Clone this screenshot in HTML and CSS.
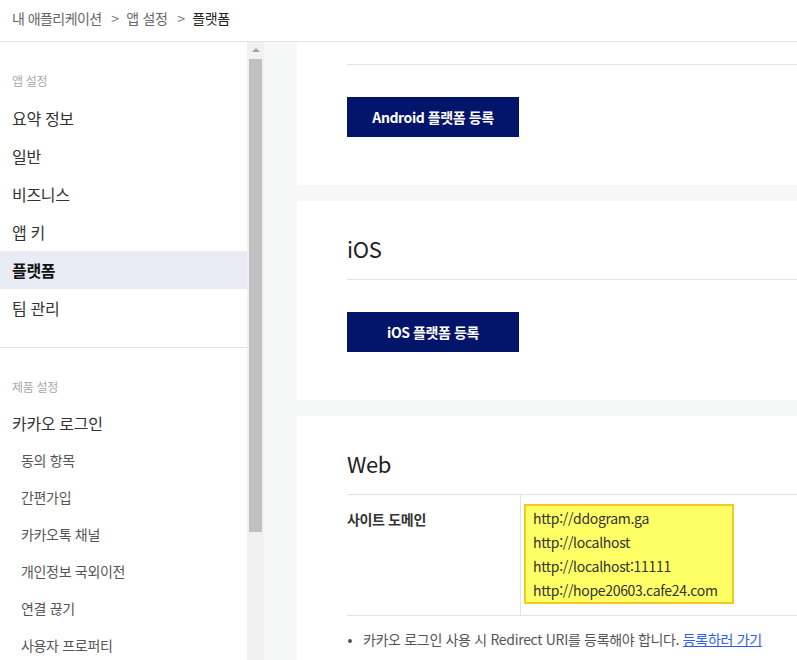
FILE: index.html
```html
<!DOCTYPE html>
<html lang="ko">
  <head>
    <meta charset="UTF-8" />
    <title>플랫폼 - 내 애플리케이션</title>
    <link rel="stylesheet" href="styles.css">
  </head>
  <body>
    <div class="breadcrumb">
      <span class="crumb">내 애플리케이션</span>
      <span class="sep">&gt;</span>
      <span class="crumb">앱 설정</span>
      <span class="sep">&gt;</span>
      <span class="crumb current">플랫폼</span>
    </div>

    <div class="layout">
      <nav class="sidebar">
        <div class="nav-label">앱 설정</div>
        <a class="nav-item">요약 정보</a>
        <a class="nav-item">일반</a>
        <a class="nav-item">비즈니스</a>
        <a class="nav-item">앱 키</a>
        <a class="nav-item active">플랫폼</a>
        <a class="nav-item">팀 관리</a>
        <hr class="nav-divider" />
        <div class="nav-label">제품 설정</div>
        <a class="nav-item">카카오 로그인</a>
        <a class="nav-sub">동의 항목</a>
        <a class="nav-sub">간편가입</a>
        <a class="nav-sub">카카오톡 채널</a>
        <a class="nav-sub">개인정보 국외이전</a>
        <a class="nav-sub">연결 끊기</a>
        <a class="nav-sub">사용자 프로퍼티</a>
      </nav>

      <div class="scrollbar">
        <div class="scroll-arrow"></div>
        <div class="scroll-thumb"></div>
      </div>

      <main class="content">
        <section class="panel panel-cut">
          <div class="panel-line"></div>
          <button class="btn-primary">Android 플랫폼 등록</button>
        </section>

        <section class="panel">
          <h2 class="panel-title">iOS</h2>
          <div class="panel-line"></div>
          <button class="btn-primary">iOS 플랫폼 등록</button>
        </section>

        <section class="panel">
          <h2 class="panel-title">Web</h2>
          <table class="info-table">
            <tr>
              <th>사이트 도메인</th>
              <td>
                <div class="domain-box">
                  <div>http://ddogram.ga</div>
                  <div>http://localhost</div>
                  <div>http://localhost:11111</div>
                  <div>http://hope20603.cafe24.com</div>
                </div>
              </td>
            </tr>
          </table>
          <ul class="notes">
            <li>카카오 로그인 사용 시 Redirect URI를 등록해야 합니다. <a href="#">등록하러 가기</a></li>
          </ul>
        </section>
      </main>
    </div>
  </body>
</html>
```

FILE: styles.css
```css
html, body {
    margin: 0;
    height: 100%;
    overflow: hidden;
}

body {
    font-family: 'Noto Sans CJK KR', 'Noto Sans', sans-serif;
    color: #333;
    background: #fff;
    letter-spacing: -0.02em;
}

.breadcrumb {
    height: 42px;
    line-height: 37px;
    padding-left: 12px;
    font-size: 14px;
    color: #666;
    border-bottom: 1px solid #e6e6e6;
    white-space: nowrap;
    box-sizing: border-box;
}

.breadcrumb .crumb:first-child {
    letter-spacing: -0.04em;
}

.breadcrumb .sep {
    margin: 0 4px 0 6px;
    color: #777;
}

.breadcrumb .current {
    color: #222;
}

.layout {
    display: flex;
    height: calc(100% - 42px);
}

/* left menu */
.sidebar {
    width: 247px;
    flex-shrink: 0;
    overflow: hidden;
}

.nav-label {
    padding: 29px 12px 0;
    line-height: 20px;
    margin-bottom: 8px;
    font-size: 12px;
    color: #aaa;
}

.nav-item,
.nav-sub {
    display: block;
    padding-left: 12px;
    white-space: nowrap;
}

.nav-item {
    height: 38px;
    line-height: 38px;
    font-size: 16px;
    color: #333;
}

.nav-item.active {
    background: #e9ecf4;
    color: #111;
    font-weight: 700;
}

.nav-sub {
    height: 37px;
    line-height: 37px;
    padding-left: 21px;
    font-size: 14px;
    color: #555;
}

.nav-divider {
    margin: 20px 0 0;
    border: 0;
    border-top: 1px solid #e2e2e2;
}

.nav-divider + .nav-label {
    margin-bottom: 7px;
}

/* fake scrollbar of the menu */
.scrollbar {
    width: 17px;
    flex-shrink: 0;
    background: #f1f1f1;
}

.scroll-arrow {
    height: 17px;
    position: relative;
}

.scroll-arrow:after {
    content: "";
    position: absolute;
    left: 5px;
    top: 6px;
    border-left: 4px solid transparent;
    border-right: 4px solid transparent;
    border-bottom: 4px solid #a3a3a3;
}

.scroll-thumb {
    margin: 0 2px;
    height: 473px;
    background: #c1c1c1;
}

/* main area */
.content {
    flex: 1;
    background: #f6f7f7;
    padding-left: 33px;
    overflow: hidden;
}

.panel {
    background: #fff;
    padding: 30px 0 48px 50px;
    margin-bottom: 16px;
}

.panel-cut {
    padding-top: 22px;
}

.panel-title {
    margin: 0 0 14px;
    font-size: 22px;
    line-height: 34px;
    font-weight: 400;
    color: #222;
}

.panel-line {
    border-top: 1px solid #e2e2e2;
    margin-bottom: 32px;
}

.btn-primary {
    display: block;
    width: 172px;
    height: 40px;
    border: 0;
    background: #03156a;
    color: #fff;
    font-family: inherit;
    font-size: 14px;
    font-weight: 700;
    letter-spacing: -0.03em;
    cursor: pointer;
}

.info-table {
    width: 100%;
    border-collapse: collapse;
    border-top: 1px solid #e2e2e2;
    border-bottom: 1px solid #e2e2e2;
}

.info-table th {
    width: 173px;
    padding: 12px 0 0;
    vertical-align: top;
    text-align: left;
    font-size: 14px;
    line-height: 24px;
    font-weight: 700;
    color: #333;
    border-right: 1px solid #e2e2e2;
}

.info-table td {
    padding: 9px 0 11px 3px;
}

.domain-box {
    display: inline-block;
    width: 190px;
    padding: 0 9px 0 7px;
    background: #ffff66;
    border: 2px solid #f7c81e;
    font-size: 14px;
    line-height: 24px;
    color: #333;
}

.notes {
    margin: 12px 0 0;
    padding-left: 16px;
    font-size: 14px;
    line-height: 22px;
    color: #555;
    white-space: nowrap;
}

.notes li::marker {
    font-size: 11px;
}

.notes a {
    color: #2f5cf5;
    text-decoration: underline;
}
```
